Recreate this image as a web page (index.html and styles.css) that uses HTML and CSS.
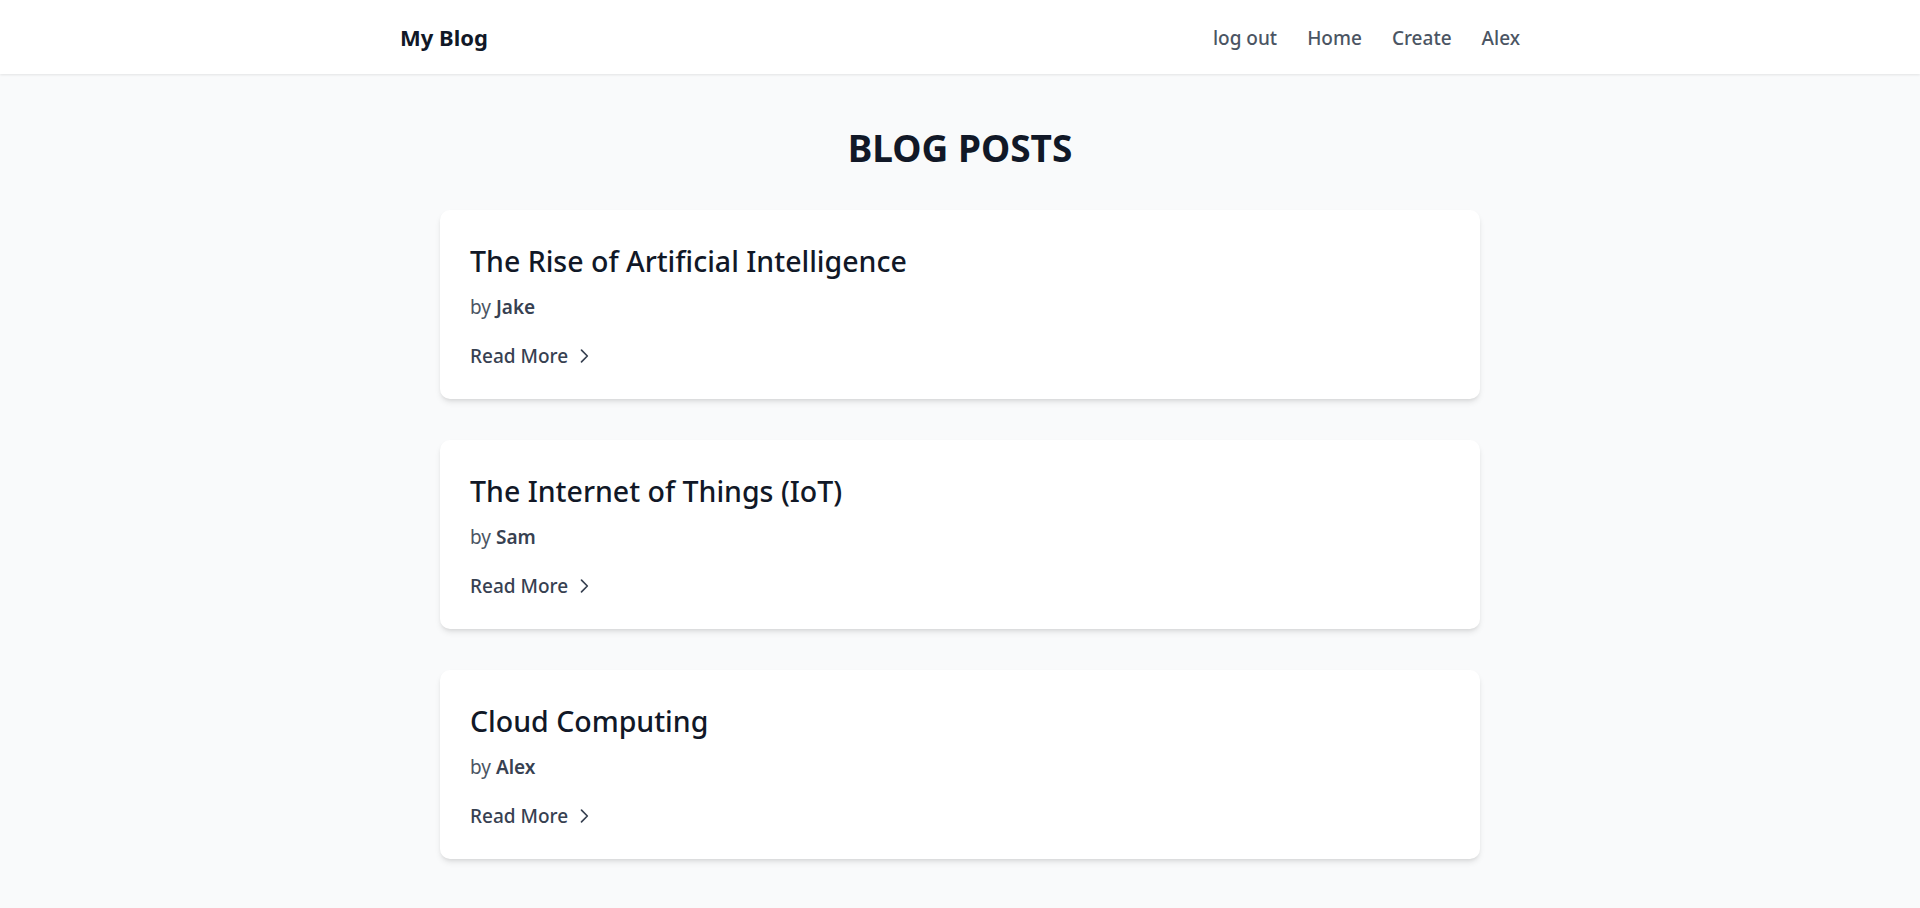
FILE: index.html
```html
<!DOCTYPE html>
<html lang="en">
<head>
<meta charset="utf-8">
<title>My Blog</title>
<link rel="stylesheet" href="styles.css">
</head>
<body>
<header class="topbar">
  <div class="topbar-inner">
    <a class="brand" href="#">My Blog</a>
    <nav class="nav">
      <a href="#">log out</a>
      <a href="#">Home</a>
      <a href="#">Create</a>
      <a href="#">Alex</a>
    </nav>
  </div>
</header>
<main class="content">
  <h1 class="page-title">BLOG POSTS</h1>
  <article class="card">
    <h2 class="card-title">The Rise of Artificial Intelligence</h2>
    <p class="card-author">by <span class="author-name">Jake</span></p>
    <a class="read-more" href="#">Read More
      <svg class="chev" width="20" height="20" viewBox="0 0 24 24" fill="none" stroke="currentColor" stroke-width="2" stroke-linecap="round" stroke-linejoin="round"><path d="M9 5l7 7-7 7"/></svg>
    </a>
  </article>
  <article class="card">
    <h2 class="card-title">The Internet of Things (IoT)</h2>
    <p class="card-author">by <span class="author-name">Sam</span></p>
    <a class="read-more" href="#">Read More
      <svg class="chev" width="20" height="20" viewBox="0 0 24 24" fill="none" stroke="currentColor" stroke-width="2" stroke-linecap="round" stroke-linejoin="round"><path d="M9 5l7 7-7 7"/></svg>
    </a>
  </article>
  <article class="card">
    <h2 class="card-title">Cloud Computing</h2>
    <p class="card-author">by <span class="author-name">Alex</span></p>
    <a class="read-more" href="#">Read More
      <svg class="chev" width="20" height="20" viewBox="0 0 24 24" fill="none" stroke="currentColor" stroke-width="2" stroke-linecap="round" stroke-linejoin="round"><path d="M9 5l7 7-7 7"/></svg>
    </a>
  </article>
</main>
</body>
</html>
```

FILE: styles.css
```css
* { box-sizing: border-box; }
html, body { margin: 0; padding: 0; }
body {
  background: #f9fafb;
  font-family: "Segoe UI", "Noto Sans", "Open Sans", sans-serif;
  color: #111827;
}
a { text-decoration: none; color: inherit; }

.topbar {
  background: #ffffff;
  height: 74px;
  box-shadow: 0 1px 3px rgba(0,0,0,0.06), 0 1px 2px rgba(0,0,0,0.04);
}
.topbar-inner {
  width: 1120px;
  height: 100%;
  margin: 0 auto;
  display: flex;
  align-items: center;
  justify-content: space-between;
}
.brand {
  font-size: 22px;
  line-height: 28px;
  font-weight: 700;
  color: #111827;
}
.nav {
  display: flex;
  gap: 30px;
  padding-top: 2px;
}
.nav a {
  font-size: 19px;
  line-height: 28px;
  font-weight: 500;
  color: #4b5563;
}

.content {
  width: 1040px;
  margin: 0 auto;
  padding-bottom: 40px;
}
.page-title {
  margin: 0;
  padding-top: 52px;
  padding-bottom: 40px;
  text-align: center;
  font-size: 37px;
  line-height: 44px;
  font-weight: 700;
  color: #111827;
}
.card {
  background: #ffffff;
  border-radius: 10px;
  box-shadow: 0 4px 6px -1px rgba(0,0,0,0.1), 0 2px 4px -2px rgba(0,0,0,0.1);
  padding: 33px 30px 0;
  height: 189px;
  margin-bottom: 41px;
}
.card-title {
  margin: 0;
  font-size: 28.5px;
  line-height: 36px;
  font-weight: 500;
  color: #111827;
}
.card-author {
  margin: 14px 0 0;
  font-size: 19px;
  line-height: 28px;
  color: #4b5563;
}
.author-name {
  font-weight: 600;
  color: #374151;
}
.read-more {
  display: flex;
  width: fit-content;
  align-items: center;
  gap: 6px;
  margin-top: 21px;
  font-size: 19px;
  line-height: 28px;
  font-weight: 500;
  color: #374151;
}
.chev { display: block; }
```
